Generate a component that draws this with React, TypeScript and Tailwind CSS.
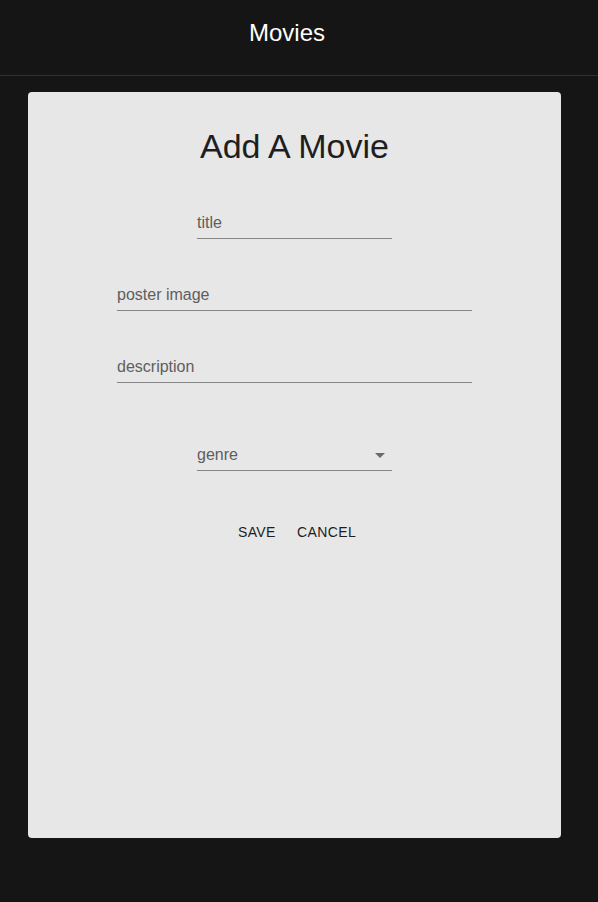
const Field = ({ label, wide }: { label: string; wide?: boolean }) => (
  <div className={`${wide ? "w-[355px]" : "w-[195px]"} h-12 pt-4 flex flex-col`}>
    <div className="flex-1 flex items-center pt-[1px] border-b border-[#868686] text-[16px] text-[#5e5e5e]">
      {label}
    </div>
  </div>
)

export default function App() {
  return (
    <div className="min-h-[902px] bg-[#151515] font-['Liberation_Sans',Arial,sans-serif]">
      <header className="h-[76px] border-b border-[#303030] flex items-center justify-center pr-6">
        <h1 className="text-white text-[24px] leading-none -mt-[9px]">Movies</h1>
      </header>

      <div className="pl-[28px] pt-4">
        <div className="w-[533px] h-[746px] bg-[#e7e7e7] rounded-[4px] flex flex-col items-center">
          <h2 className="mt-[33px] text-[34px] leading-[42px] text-[#1e1e1e]">Add A Movie</h2>

          <div className="mt-6 flex flex-col items-center gap-6">
            <Field label="title" />
            <Field label="poster image" wide />
            <Field label="description" wide />
          </div>

          <div className="mt-10 w-[195px] h-12 pt-4 flex flex-col">
            <div className="flex-1 flex items-center justify-between pt-[1px] border-b border-[#868686] text-[16px] text-[#5e5e5e]">
              <span>genre</span>
              <svg viewBox="0 0 24 24" className="w-6 h-6 -mt-[1px] fill-[#6a6a6a]">
                <path d="M7 10l5 5 5-5z" />
              </svg>
            </div>
          </div>

          <div className="mt-[43px] flex">
            <button className="h-9 min-w-16 px-2 text-[14px] uppercase tracking-[0.4px] text-[#1e1e1e]">Save</button>
            <button className="h-9 min-w-16 px-2 text-[14px] uppercase tracking-[0.4px] text-[#1e1e1e]">Cancel</button>
          </div>
        </div>
      </div>
    </div>
  )
}
